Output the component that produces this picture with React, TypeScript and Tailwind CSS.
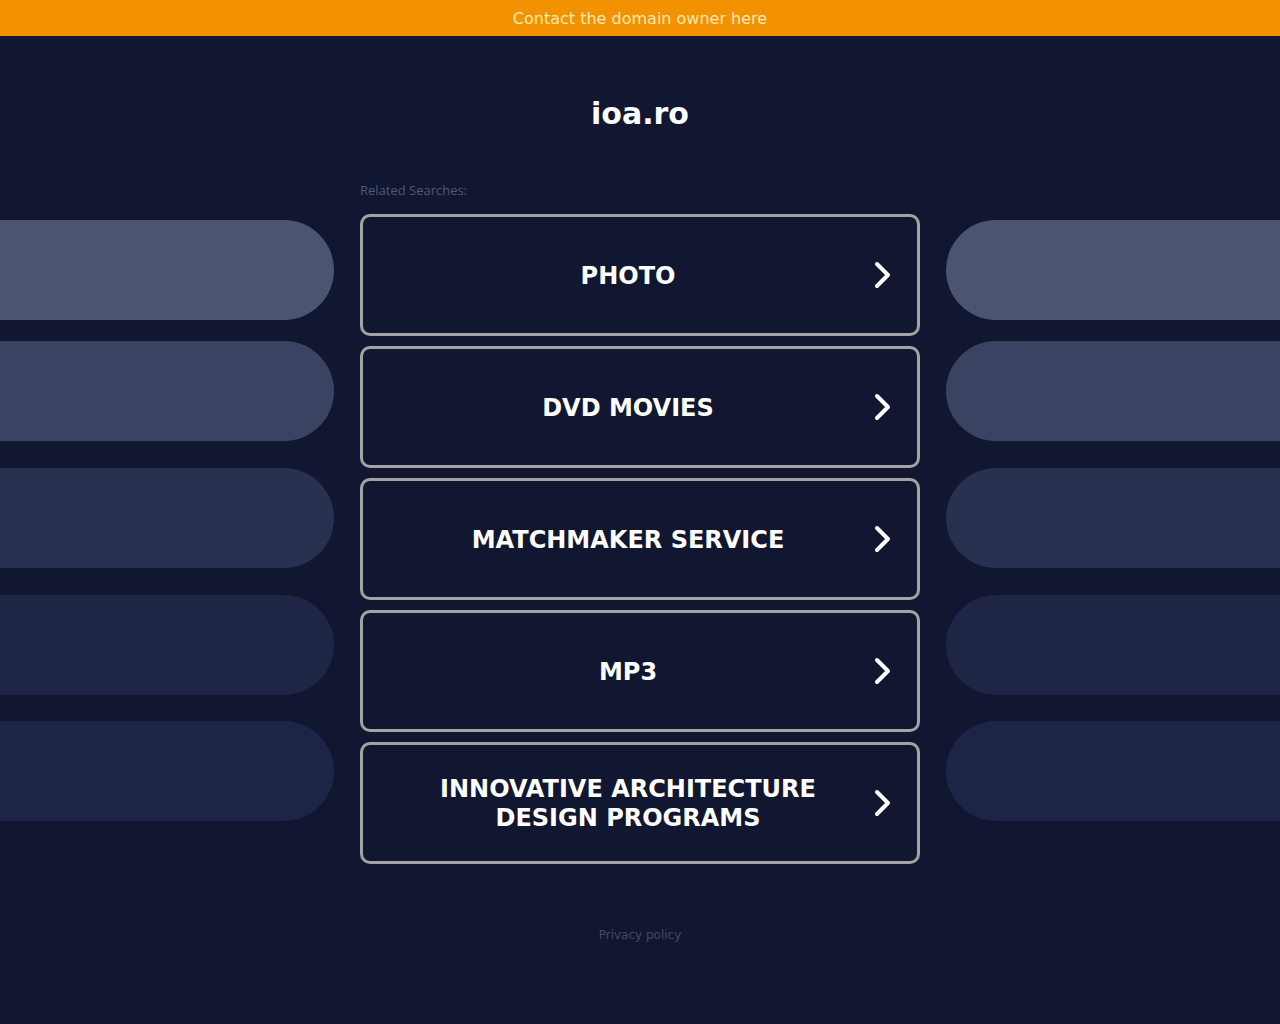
import React from 'react';

const searches = [
  'PHOTO',
  'DVD MOVIES',
  'MATCHMAKER SERVICE',
  'MP3',
  'INNOVATIVE ARCHITECTURE DESIGN PROGRAMS',
];

// side decor pills, top margin + colour for each row
const pills = [
  { mt: 'mt-[6px]', bg: 'bg-[#4b5572]' },
  { mt: 'mt-[21px]', bg: 'bg-[#3a4462]' },
  { mt: 'mt-[27px]', bg: 'bg-[#283150]' },
  { mt: 'mt-[27px]', bg: 'bg-[#1e2545]' },
  { mt: 'mt-[26px]', bg: 'bg-[#1c2545]' },
];

const Chevron: React.FC = () => (
  <svg width="24" height="30" viewBox="0 0 24 30" fill="none">
    <path d="M8 4 L19 15 L8 26" stroke="white" strokeWidth="4" strokeLinecap="round" strokeLinejoin="round" />
  </svg>
);

export default function App() {
  return (
    <div className="min-h-screen bg-[#111730] overflow-hidden" style={{ fontFamily: '"DejaVu Sans", sans-serif' }}>
      <div className="h-9 bg-[#f39200] flex items-center justify-center pt-[2px]">
        <a href="#" className="text-[16px] text-[#fde9b4]">Contact the domain owner here</a>
      </div>

      <h1 className="mt-[58px] text-center text-[30px] leading-[40px] font-bold text-white">ioa.ro</h1>

      <div className="mt-[48px] flex gap-[26px]">
        {/* left decor */}
        <div className="flex-1 flex flex-col pt-[32px]">
          {pills.map((p, i) => (
            <div key={i} className={`${p.mt} h-[100px] rounded-r-full ${p.bg}`} />
          ))}
        </div>

        <div className="w-[560px] shrink-0">
          <p className="text-[13px] leading-[16px] font-medium text-[#4f5877] mb-[16px]" style={{ fontFamily: '"Open Sans", sans-serif' }}>
            Related Searches:
          </p>
          <div className="flex flex-col gap-[10px]">
            {searches.map((s) => (
              <a
                key={s}
                href="#"
                className="h-[122px] border-[3px] border-[#a3a3a3] rounded-[10px] flex items-center pl-6 pr-6"
              >
                <span className="flex-1 text-center text-white font-bold text-[24px] leading-[29px] px-[30px] pt-[2px]">
                  {s}
                </span>
                <Chevron />
              </a>
            ))}
          </div>
        </div>

        {/* right decor */}
        <div className="flex-1 flex flex-col pt-[32px]">
          {pills.map((p, i) => (
            <div key={i} className={`${p.mt} h-[100px] rounded-l-full ${p.bg}`} />
          ))}
        </div>
      </div>

      <p className="mt-[62px] text-center text-[12px] text-[#414a66]">Privacy policy</p>
    </div>
  );
}
